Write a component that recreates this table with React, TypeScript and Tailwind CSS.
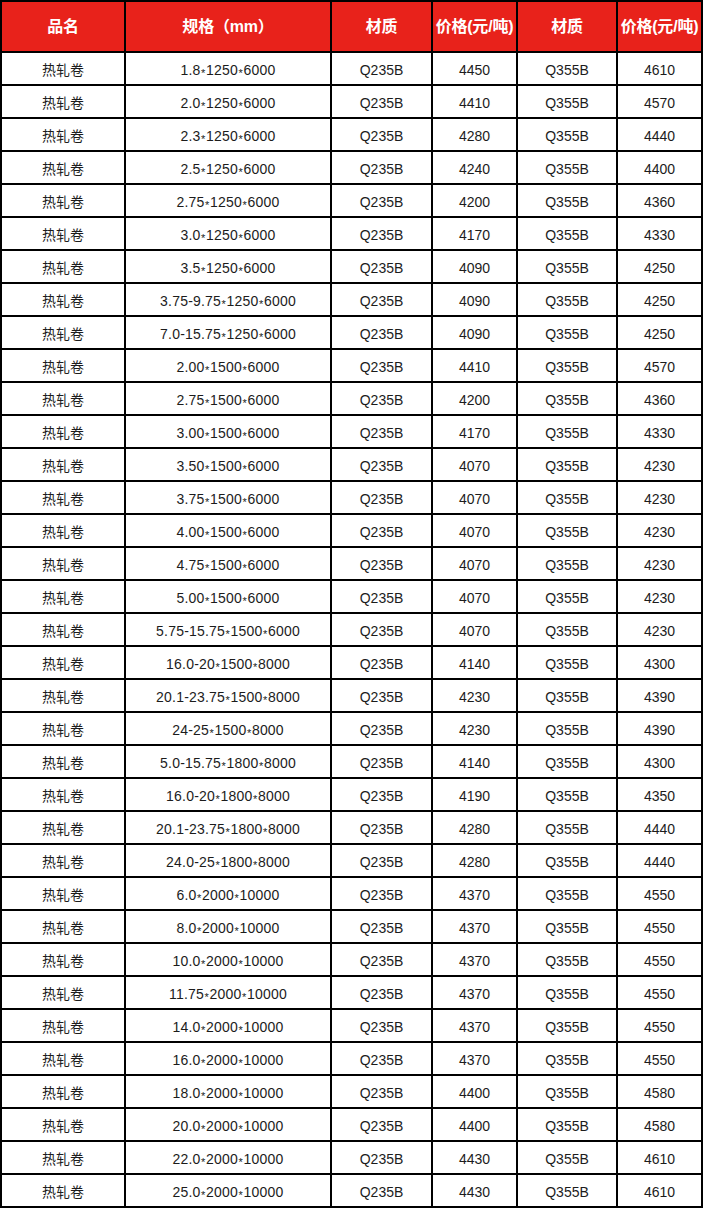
const rows: [string, number, number][] = [
  ['1.8*1250*6000', 4450, 4610],
  ['2.0*1250*6000', 4410, 4570],
  ['2.3*1250*6000', 4280, 4440],
  ['2.5*1250*6000', 4240, 4400],
  ['2.75*1250*6000', 4200, 4360],
  ['3.0*1250*6000', 4170, 4330],
  ['3.5*1250*6000', 4090, 4250],
  ['3.75-9.75*1250*6000', 4090, 4250],
  ['7.0-15.75*1250*6000', 4090, 4250],
  ['2.00*1500*6000', 4410, 4570],
  ['2.75*1500*6000', 4200, 4360],
  ['3.00*1500*6000', 4170, 4330],
  ['3.50*1500*6000', 4070, 4230],
  ['3.75*1500*6000', 4070, 4230],
  ['4.00*1500*6000', 4070, 4230],
  ['4.75*1500*6000', 4070, 4230],
  ['5.00*1500*6000', 4070, 4230],
  ['5.75-15.75*1500*6000', 4070, 4230],
  ['16.0-20*1500*8000', 4140, 4300],
  ['20.1-23.75*1500*8000', 4230, 4390],
  ['24-25*1500*8000', 4230, 4390],
  ['5.0-15.75*1800*8000', 4140, 4300],
  ['16.0-20*1800*8000', 4190, 4350],
  ['20.1-23.75*1800*8000', 4280, 4440],
  ['24.0-25*1800*8000', 4280, 4440],
  ['6.0*2000*10000', 4370, 4550],
  ['8.0*2000*10000', 4370, 4550],
  ['10.0*2000*10000', 4370, 4550],
  ['11.75*2000*10000', 4370, 4550],
  ['14.0*2000*10000', 4370, 4550],
  ['16.0*2000*10000', 4370, 4550],
  ['18.0*2000*10000', 4400, 4580],
  ['20.0*2000*10000', 4400, 4580],
  ['22.0*2000*10000', 4430, 4610],
  ['25.0*2000*10000', 4430, 4610],
]

const headers = ['品名', '规格（mm）', '材质', '价格(元/吨)', '材质', '价格(元/吨)']

// the spec column's "*" sits low and small, like the sheet's font
function Spec({ text }: { text: string }) {
  const parts = text.split('*')
  return (
    <span className="tracking-[0.2px]">
      {parts.map((p, i) => (
        <span key={i}>
          {i > 0 && <span className="inline-block translate-y-[2px] px-[0.5px] text-[11px]">*</span>}
          {p}
        </span>
      ))}
    </span>
  )
}

export default function App() {
  return (
    <div className="w-[704px] bg-white font-['Liberation_Sans','Noto_Sans_CJK_SC',sans-serif]">
      <div className="grid h-[1208px] w-[703px] grid-cols-[122px_204px_99px_83px_98px_83px] grid-rows-[49px_repeat(35,minmax(0,1fr))] gap-[2px] bg-black p-[2px]">
        {headers.map((h, i) => (
          <div
            key={i}
            className="flex items-center justify-center overflow-hidden whitespace-nowrap bg-[#e8221b] text-[16px] font-bold tracking-[-0.2px] text-white"
          >
            {h}
          </div>
        ))}
        {rows.map(([spec, p1, p2], i) => (
          <div key={i} className="contents text-[14px] text-[#1c1c1c]">
            <div className="flex items-center justify-center bg-white pt-[3px]">热轧卷</div>
            <div className="flex items-center justify-center bg-white pt-[3px]">
              <Spec text={spec} />
            </div>
            <div className="flex items-center justify-center bg-white pt-[3px]">Q235B</div>
            <div className="flex items-center justify-center bg-white pt-[3px]">{p1}</div>
            <div className="flex items-center justify-center bg-white pt-[3px]">Q355B</div>
            <div className="flex items-center justify-center bg-white pt-[3px]">{p2}</div>
          </div>
        ))}
      </div>
    </div>
  )
}
